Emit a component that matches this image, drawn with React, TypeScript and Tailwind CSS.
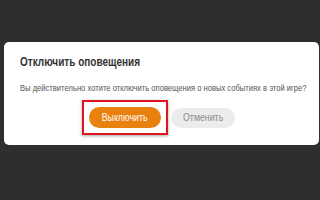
export default function App() {
  return (
    <div className="w-[320px] h-[200px] bg-[#2e2e2e] pt-[42px] pl-[4px] font-['Liberation_Sans',Arial,sans-serif]">
      <div className="w-[315px] h-[103px] bg-white rounded-[5px] px-[16px] pt-[12px]">
        <h1 className="text-[13px] leading-[16px] font-bold text-[#333] whitespace-nowrap origin-left scale-x-[0.77]">
          Отключить оповещения
        </h1>
        <p className="mt-[11px] text-[9.5px] leading-[14px] text-[#555] whitespace-nowrap origin-left scale-x-[0.8]">
          Вы действительно хотите отключить оповещения о новых событиях в этой игре?
        </p>
        <div className="mt-[5px] pl-[62px] flex items-center gap-[3px]">
          <div className="border-2 border-[#e0141e] px-[5px] py-[5px] shadow-[0_1px_3px_rgba(0,0,0,0.35)]">
            <button className="h-[21px] w-[72px] rounded-full bg-[#e8810d] text-white text-[11px] flex items-center justify-center">
              <span className="scale-x-[0.8] whitespace-nowrap">Выключить</span>
            </button>
          </div>
          <button className="h-[20px] w-[64px] rounded-full bg-[#ececec] text-[#8a8a8a] text-[11px] flex items-center justify-center">
            <span className="scale-x-[0.8] whitespace-nowrap">Отменить</span>
          </button>
        </div>
      </div>
    </div>
  );
}
